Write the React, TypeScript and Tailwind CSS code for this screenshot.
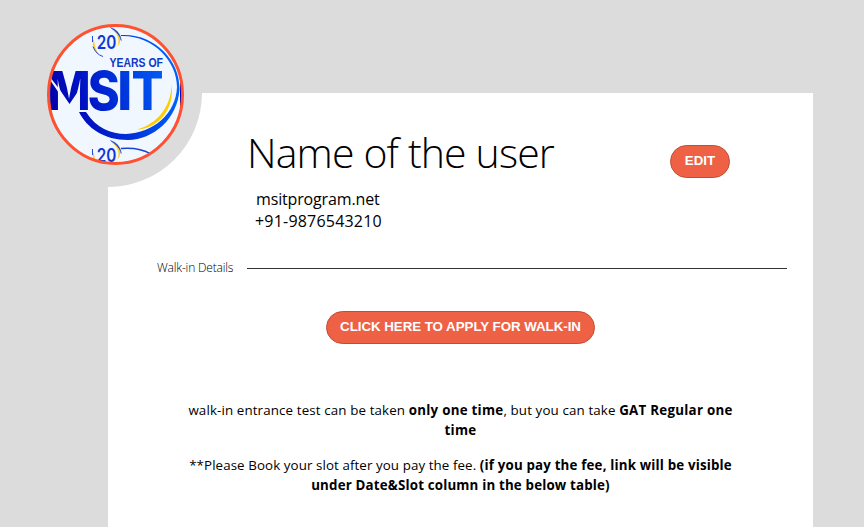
function Emblem() {
  return (
    <g>
      <path d="M110.5 27.5 Q120 30.5 121.3 40.5 Q117.5 32 110.5 27.5Z" fill="#1237d6" stroke="#1237d6" strokeWidth="0.5" />
      <path d="M112 29.5 Q118 34 118.5 40 Q118.7 43 117.5 46.5 Q120.6 43 120.2 38.5 Q117.5 32 112 29.5Z" fill="#ffcc19" />
      <path d="M93.4 40 Q92 49 97.5 53.5 Q94.6 48 93.4 40Z" fill="#ffcc19" stroke="#ffcc19" strokeWidth="0.5" />
      <path d="M92.5 36 V42 M93 46.5 Q96 54.5 103 56.5" fill="none" stroke="#1237d6" strokeWidth="0.9" />
      <text x="96.7" y="49.3" textLength="19.6" lengthAdjust="spacingAndGlyphs" fontFamily="Inter, sans-serif" fontSize="19" fontWeight="600" fill="#1237d6">20</text>
    </g>
  );
}

function Logo() {
  return (
    <svg className="block h-full w-full" viewBox="47 24 137 141" preserveAspectRatio="none" role="img" aria-label="MSIT 20 years">
      <defs>
        <linearGradient id="brand" gradientUnits="userSpaceOnUse" x1="50" y1="110" x2="168" y2="75">
          <stop offset="0" stopColor="#0000a8" />
          <stop offset="0.3" stopColor="#0014c4" />
          <stop offset="1" stopColor="#0060fa" />
        </linearGradient>
        <clipPath id="disc"><ellipse cx="115.5" cy="94.5" rx="67.5" ry="69.5" /></clipPath>
      </defs>
      <g clipPath="url(#disc)">
        <rect x="47" y="24" width="137" height="141" fill="#f0f7ff" />
        <Emblem />
        <g transform="translate(0 113)"><Emblem /><path d="M121 35.5 Q139 34 151 41" fill="none" stroke="#1642d8" strokeWidth="1.3" /></g>
        <path d="M121 35 C154 33 180 60 179.5 89 C178 119 153 139.8 128 140 C104 140 87 128 79 112 L86 112 C96 128 111 134 126 134 C153 133 176 114 177 87 C177 61 153 35 121 36Z" fill="url(#brand)" />
        <path d="M171.5 85 C175 109 158 129 137 129.5 C157 124 171 107 171.5 85Z" fill="#ffcc00" />
        <rect x="180" y="74" width="4" height="35" fill="#0000b4" />
        <text x="109.5" y="66.6" textLength="53.5" lengthAdjust="spacingAndGlyphs" fontFamily="Liberation Sans, Arial, sans-serif" fontSize="11.9" fontWeight="700" fill="#1037c9">YEARS OF</text>
        <g fontFamily="Inter, sans-serif" fontWeight="800" fontSize="53.5" fill="url(#brand)">
          <text x="47.5" y="109.7" textLength="43" lengthAdjust="spacingAndGlyphs">M</text>
          <text x="87.7" y="109.5" textLength="32" lengthAdjust="spacingAndGlyphs">S</text>
          <text x="117.2" y="109.7" textLength="15" lengthAdjust="spacingAndGlyphs">I</text>
          <text x="131.5" y="109.7" textLength="32" lengthAdjust="spacingAndGlyphs">T</text>
        </g>
        {/* Diagonal cut and raised vertex of the M */}
        <path d="M50 77 L60 90 L69.5 104 L79 90 V111 H59 V93 L50 80Z" fill="#f0f7ff" />
      </g>
      <ellipse cx="115.5" cy="94.5" rx="67" ry="69" fill="none" stroke="#ff5030" strokeWidth="3" />
    </svg>
  );
}

const pill =
  "flex h-[33px] items-center justify-center rounded-[17px] border border-[#c04d36] bg-[#ee6145] font-['Liberation_Sans',Arial,sans-serif] text-[13.33px] font-bold text-white whitespace-nowrap";

export default function App() {
  return (
    <main className="h-[527px] w-[864px] overflow-hidden bg-[#dcdcdc] pt-[93px] pl-[108px] font-['Open_Sans',sans-serif] text-black">
      <section className="relative h-[434px] w-[705px] bg-white">
        <div className="absolute top-0 left-0 h-[94px] w-[94px] rounded-br-full bg-[#dcdcdc]" />
        <div className="absolute top-[-69px] left-[-61px] h-[141px] w-[137px]"><Logo /></div>
        <header className="flex h-[142px] justify-between pr-[83px] pl-[139px]">
          <div className="pt-[31px]">
            <h1 className="text-[41px] leading-[57px] font-light tracking-[-0.85px] whitespace-nowrap">Name of the user</h1>
            <div className="pt-[7px] pl-[9px] text-[16px] leading-[22px] whitespace-nowrap">
              <p className="tracking-[-0.15px]">msitprogram.net</p>
              <p className="-ml-px tracking-[0.2px]">+91-9876543210</p>
            </div>
          </div>
          <button className={`${pill} mt-[52px] w-[60px] pb-[2px]`}>EDIT</button>
        </header>
        <div className="flex h-[66px] items-center pr-[26px] pl-[49px]">
          <h2 className="w-[90px] text-[12px] leading-4 font-light tracking-[-0.17px] whitespace-nowrap">Walk-in Details</h2>
          <div className="h-px flex-1 bg-[#333]" />
        </div>
        <div className="mt-[10px] flex pl-[218px]">
          <button className={`${pill} w-[269px] pb-px tracking-[-0.04px]`}>CLICK HERE TO APPLY FOR WALK-IN</button>
        </div>
        <div className="mt-[56px] flex flex-col gap-[15px] text-center text-[13.33px] leading-[20px] tracking-[0.13px] whitespace-nowrap">
          <p>walk-in entrance test can be taken <b className="tracking-[0.26px]">only one time</b>, but you can take <b className="tracking-[0.26px]">GAT Regular one<br />time</b></p>
          <p className="tracking-[0.09px]">**Please Book your slot after you pay the fee. <b className="tracking-[0.17px]">(if you pay the fee, link will be visible<br />under Date&amp;Slot column in the below table)</b></p>
        </div>
      </section>
    </main>
  );
}
